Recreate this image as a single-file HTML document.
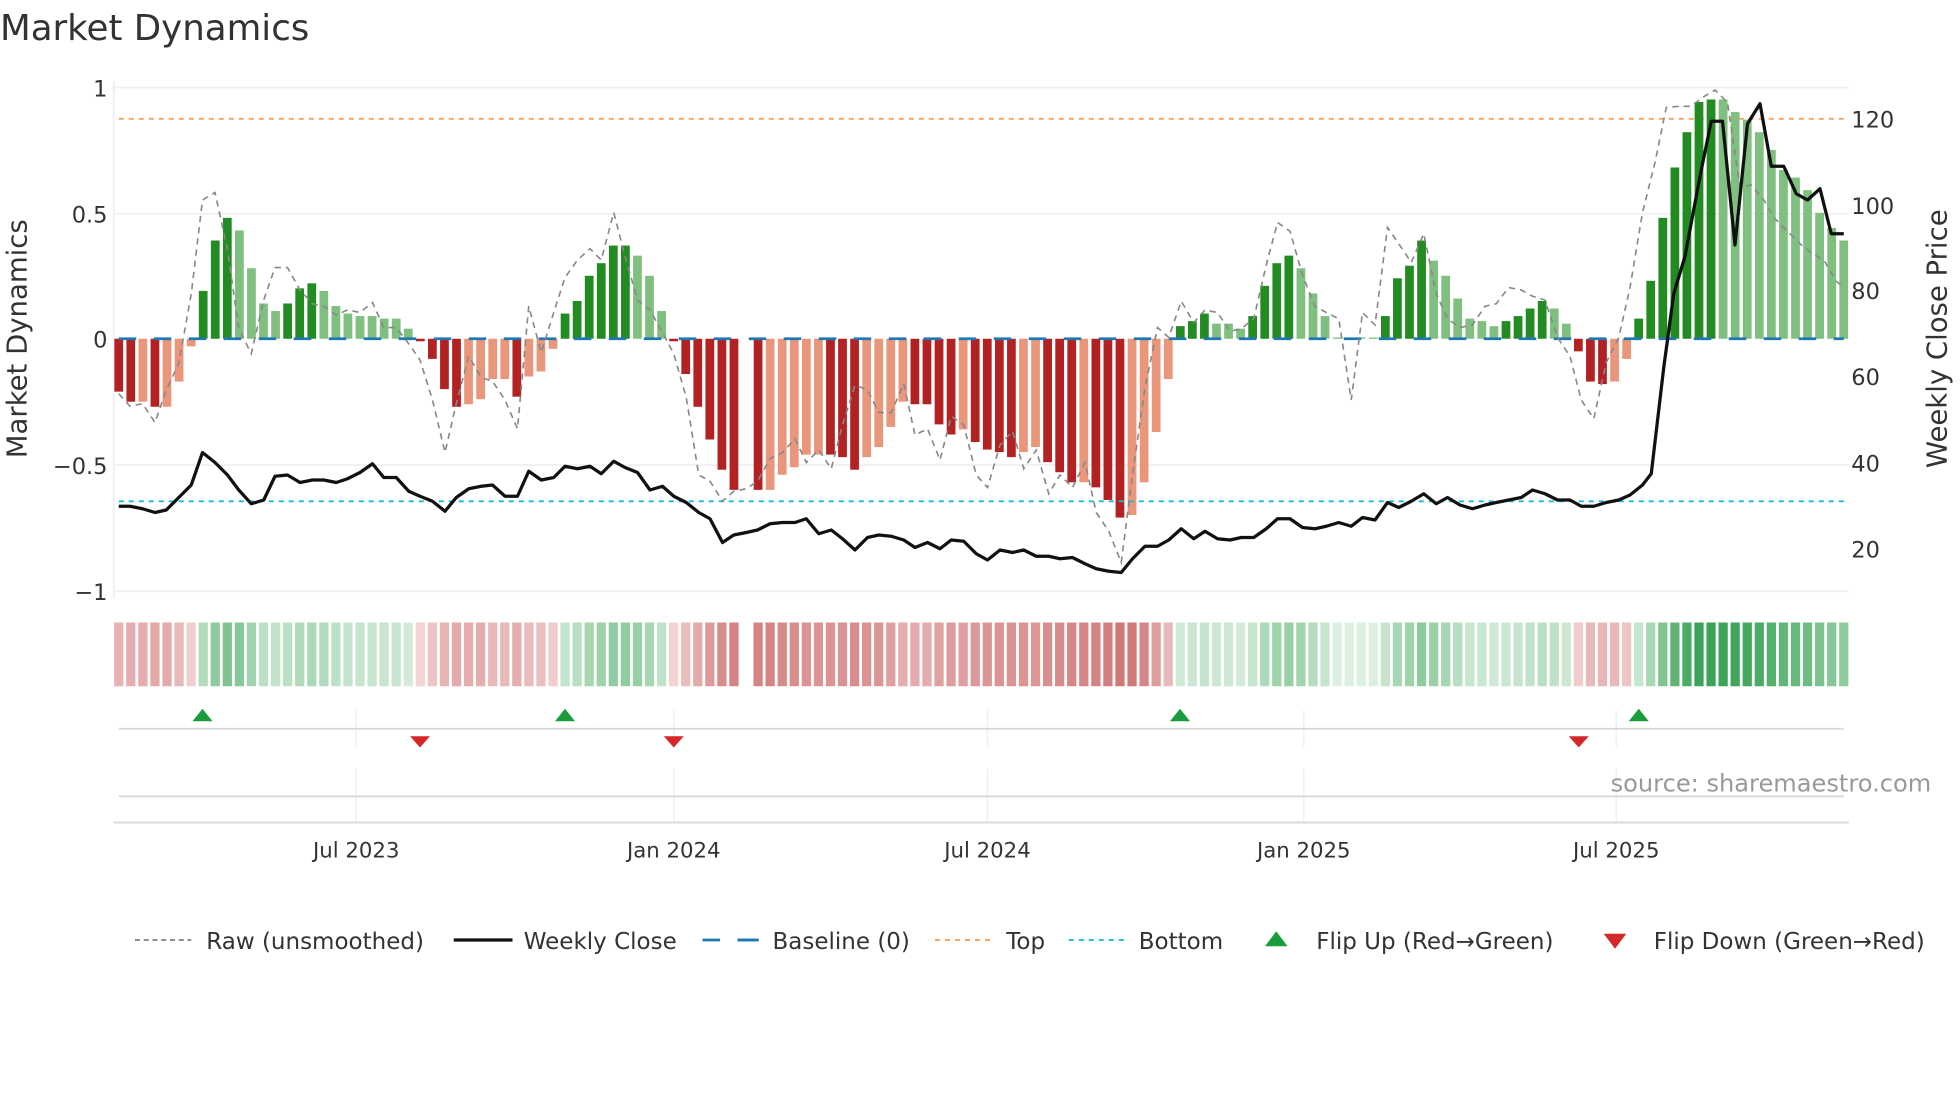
<!DOCTYPE html>
<html><head><meta charset="utf-8"><style>
html,body{margin:0;padding:0;background:#fff;}
svg{display:block;}
text{font-family:"DejaVu Sans","Liberation Sans",sans-serif;fill:#333;}
</style></head><body>
<svg id="s" width="1960" height="1102" viewBox="0 0 1568 881.6" xmlns="http://www.w3.org/2000/svg">
<rect width="1568" height="882" fill="#fff"/>
<text x="0" y="32" font-size="28.5" fill="#333">Market Dynamics</text>
<g stroke="#eef0f3" stroke-width="1.5">
<line x1="91" y1="70" x2="1479" y2="70"/>
<line x1="91" y1="171" x2="1479" y2="171"/>
<line x1="91" y1="372" x2="1479" y2="372"/>
<line x1="91" y1="473" x2="1479" y2="473"/>
<line x1="91" y1="65" x2="91" y2="478"/>
</g>
<g font-size="18" text-anchor="end">
<text x="86" y="77">1</text>
<text x="86" y="178">0.5</text>
<text x="86" y="278">0</text>
<text x="86" y="379">−0.5</text>
<text x="86" y="480">−1</text>
</g>
<g font-size="18" text-anchor="start">
<text x="1481" y="102">120</text>
<text x="1481" y="171">100</text>
<text x="1481" y="239">80</text>
<text x="1481" y="308">60</text>
<text x="1481" y="377">40</text>
<text x="1481" y="446">20</text>
</g>
<text transform="translate(21,271) rotate(-90)" font-size="22" text-anchor="middle">Market Dynamics</text>
<text transform="translate(1557,271) rotate(-90)" font-size="22" text-anchor="middle">Weekly Close Price</text>
<line x1="95" y1="95" x2="1475" y2="95" stroke="#f4a460" stroke-width="1.5" stroke-dasharray="4,4"/>
<g id="bars"></g>
<line x1="95" y1="271" x2="1475" y2="271" stroke="#1f77b4" stroke-width="2.2" stroke-dasharray="14,14"/>
<line x1="95" y1="401" x2="1475" y2="401" stroke="#17becf" stroke-width="1.5" stroke-dasharray="4,4"/>
<polyline id="raw" fill="none" stroke="#888" stroke-width="1.3" stroke-dasharray="5,4"/>
<polyline id="price" fill="none" stroke="#111" stroke-width="2.6" stroke-linejoin="round"/>
<g id="strip"></g>
<g stroke="#eef0f3" stroke-width="1.2">
<line x1="285" y1="568" x2="285" y2="598"/><line x1="539" y1="568" x2="539" y2="598"/><line x1="790" y1="568" x2="790" y2="598"/><line x1="1043" y1="568" x2="1043" y2="598"/><line x1="1293" y1="568" x2="1293" y2="598"/>
<line x1="285" y1="615" x2="285" y2="658"/><line x1="539" y1="615" x2="539" y2="658"/><line x1="790" y1="615" x2="790" y2="658"/><line x1="1043" y1="615" x2="1043" y2="658"/><line x1="1293" y1="615" x2="1293" y2="658"/>
</g>
<line x1="95" y1="583" x2="1475" y2="583" stroke="#d5d8dc" stroke-width="1.5"/>
<line x1="95" y1="637" x2="1475" y2="637" stroke="#d5d8dc" stroke-width="1.5"/>
<line x1="91" y1="658" x2="1479" y2="658" stroke="#d5d8dc" stroke-width="1.5"/>
<g fill="#1a9c3c">
<path d="M154,577 L162,567 L170,577Z"/><path d="M444,577 L452,567 L460,577Z"/><path d="M936,577 L944,567 L952,577Z"/><path d="M1303,577 L1311,567 L1319,577Z"/>
</g>
<g fill="#d62728">
<path d="M328,589 L344,589 L336,598Z"/><path d="M531,589 L547,589 L539,598Z"/><path d="M1255,589 L1271,589 L1263,598Z"/>
</g>
<text x="1545" y="633" font-size="19.3" text-anchor="end" style="fill:#999">source: sharemaestro.com</text>
<g font-size="17" text-anchor="middle">
<text x="285" y="686">Jul 2023</text><text x="539" y="686">Jan 2024</text><text x="790" y="686">Jul 2024</text><text x="1043" y="686">Jan 2025</text><text x="1293" y="686">Jul 2025</text>
</g>
<g font-size="18.4">
<line x1="108" y1="752" x2="153" y2="752" stroke="#888" stroke-width="1.5" stroke-dasharray="4,3"/>
<text x="165" y="759">Raw (unsmoothed)</text>
<line x1="363" y1="752" x2="410" y2="752" stroke="#111" stroke-width="2.6"/>
<text x="419" y="759">Weekly Close</text>
<line x1="562" y1="752" x2="607" y2="752" stroke="#1f77b4" stroke-width="2.2" stroke-dasharray="14,14"/>
<line x1="590" y1="752" x2="607" y2="752" stroke="#1f77b4" stroke-width="2.2"/>
<text x="618" y="759">Baseline (0)</text>
<line x1="748" y1="752" x2="793" y2="752" stroke="#f4a460" stroke-width="1.5" stroke-dasharray="4,4"/>
<text x="805" y="759">Top</text>
<line x1="855" y1="752" x2="900" y2="752" stroke="#17becf" stroke-width="1.5" stroke-dasharray="4,4"/>
<text x="911" y="759">Bottom</text>
<path d="M1012,757 L1021,745 L1030,757Z" fill="#1a9c3c"/>
<text x="1053" y="759">Flip Up (Red→Green)</text>
<path d="M1283,747 L1301,747 L1292,759Z" fill="#d62728"/>
<text x="1323" y="759">Flip Down (Green→Red)</text>
</g>
</svg>
<script>
var V="-.21D -.25D -.25L -.27D -.27L -.17L -.03L .19D .39D .48D .43L .28L .14L .11L .14D .20D .22D .19L .13L .10L .09L .09L .08L .08L .04L -.01D -.08D -.20D -.27D -.26L -.24L -.16L -.16L -.23D -.15L -.13L -.04L .10D .15D .25D .30D .37D .37D .33L .25L .11L -.01D -.14D -.27D -.40D -.52D -.60D 0G -.60D -.60L -.54L -.51L -.46L -.46L -.46D -.47D -.52D -.47L -.43L -.35L -.25L -.26D -.26D -.34D -.38D -.36L -.41D -.44D -.45D -.47D -.45L -.43L -.49D -.53D -.57D -.57L -.59D -.64D -.71D -.70L -.57L -.37L -.16L .05D .07D .10D .06L .06L .04L .09D .21D .30D .33D .28L .18L .09L .005L .005L .005L .005L .09D .24D .29D .39D .31L .25L .16L .08L .07L .05L .07D .09D .12D .15D .12L .06L -.05D -.17D -.18D -.17L -.08L .08D .23D .48D .68D .82D .94D .95D .95L .90L .87L .82L .75L .67L .64L .59L .50L .44L .39L".split(" ");
var NS="http://www.w3.org/2000/svg",n=V.length,x0=95,x1=1475,dx=(x1-x0)/(n-1);
function el(g,t,a){var e=document.createElementNS(NS,t);for(var k in a)e.setAttribute(k,a[k]);g.appendChild(e);}
function mix(a,b,t){var r=[];for(var i=0;i<3;i++)r.push(Math.round(a[i]+(b[i]-a[i])*t));return"rgb("+r+")";}
var bars=document.getElementById("bars"),strip=document.getElementById("strip");
for(var i=0;i<n;i++){var s=V[i],v=parseFloat(s),ty=s.slice(-1),x=x0+i*dx;
 if(ty=="G")continue;
 var c=v>=0?(ty=="D"?"#228b22":"#7fbf7f"):(ty=="D"?"#b22222":"#e9967a");
 var h=Math.abs(v)*201.5,y=v>=0?271-h:271;
 el(bars,"rect",{x:x-3.5,y:y,width:7,height:Math.max(h,0.5),fill:c});
 var t,col;
 if(v>=0){t=Math.min(1,v/0.95);col=mix([222,241,227],[58,163,85],Math.pow(t,0.8));}
 else{t=Math.min(1,-v/0.72);col=mix([244,214,214],[208,118,118],Math.pow(t,0.8));}
 el(strip,"rect",{x:x-3.7,y:498,width:7.4,height:51,fill:col});
}
var P=[[95,405],[104,405],[114,407],[124,410],[133,408],[143,398],[153,388],[162,362],[172,370],[182,380],[191,392],[201,403],[211,400],[220,381],[230,380],[240,386],[250,384],[259,384],[269,386],[278,383],[288,378],[298,371],[307,382],[317,382],[327,393],[336,397],[346,401],[356,409],[365,398],[375,391],[385,389],[394,388],[404,397],[414,397],[423,377],[433,384],[443,382],[452,373],[462,375],[472,373],[481,379],[491,369],[500,374],[510,378],[520,392],[530,389],[539,397],[549,402],[559,410],[568,415],[578,434],[587,428],[597,426],[606,424],[616,419],[626,418],[636,418],[645,415],[655,427],[665,424],[674,431],[684,440],[694,430],[703,428],[713,429],[723,432],[732,438],[742,434],[752,439],[761,432],[771,433],[781,443],[790,448],[800,440],[810,442],[819,440],[829,445],[839,445],[848,447],[858,446],[868,451],[877,455],[887,457],[897,458],[906,447],[916,437],[926,437],[935,432],[945,423],[955,431],[964,425],[974,431],[984,432],[993,430],[1003,430],[1013,423],[1022,415],[1032,415],[1042,422],[1052,423],[1061,421],[1071,418],[1081,421],[1090,414],[1100,416],[1110,402],[1119,406],[1129,401],[1139,395],[1149,403],[1158,398],[1168,404],[1178,407],[1188,404],[1197,402],[1207,400],[1217,398],[1226,392],[1236,395],[1246,400],[1256,400],[1265,405],[1275,405],[1285,402],[1295,400],[1304,396],[1314,388],[1321,379],[1331,294],[1339,235],[1348,205],[1360,141],[1369,97],[1378,97],[1388,196],[1398,99],[1408,83],[1417,133],[1427,133],[1437,155],[1446,160],[1456,151],[1465,187],[1475,187]];
document.getElementById("price").setAttribute("points",P.join(" "));
var R=[[95,315],[104,325],[114,323],[124,338],[133,312],[143,291],[153,235],[162,160],[172,154],[182,200],[191,263],[201,283],[211,240],[220,214],[230,214],[240,232],[250,243],[259,245],[269,252],[278,248],[288,250],[298,242],[307,262],[317,262],[327,275],[336,288],[346,320],[356,362],[365,323],[375,285],[385,302],[394,305],[404,320],[414,343],[423,245],[433,282],[443,250],[452,222],[462,208],[472,199],[481,208],[491,170],[500,205],[510,240],[520,248],[530,266],[539,283],[549,318],[559,380],[568,385],[578,401],[587,393],[597,391],[606,385],[616,367],[626,362],[636,351],[645,370],[655,360],[665,375],[674,340],[684,308],[694,312],[703,330],[713,330],[723,307],[732,348],[742,343],[752,368],[761,333],[771,340],[781,380],[790,390],[800,356],[810,345],[819,375],[829,360],[839,395],[848,380],[858,390],[868,370],[877,410],[887,425],[897,450],[906,380],[916,310],[926,262],[935,270],[945,241],[955,258],[964,248],[974,250],[984,265],[993,263],[1003,255],[1013,212],[1022,178],[1032,185],[1042,220],[1052,245],[1061,250],[1071,255],[1081,320],[1090,250],[1100,260],[1110,182],[1119,195],[1129,210],[1139,187],[1149,235],[1158,255],[1168,262],[1178,260],[1188,245],[1197,243],[1207,230],[1217,232],[1226,237],[1236,240],[1246,270],[1256,285],[1265,320],[1275,335],[1285,290],[1295,270],[1304,230],[1314,170],[1324,130],[1333,86],[1343,85],[1353,85],[1362,78],[1372,72],[1382,82],[1392,150],[1401,148],[1411,160],[1420,175],[1430,185],[1440,195],[1450,203],[1459,208],[1469,225],[1475,230]];
document.getElementById("raw").setAttribute("points",R.join(" "));
</script>
</body></html>
